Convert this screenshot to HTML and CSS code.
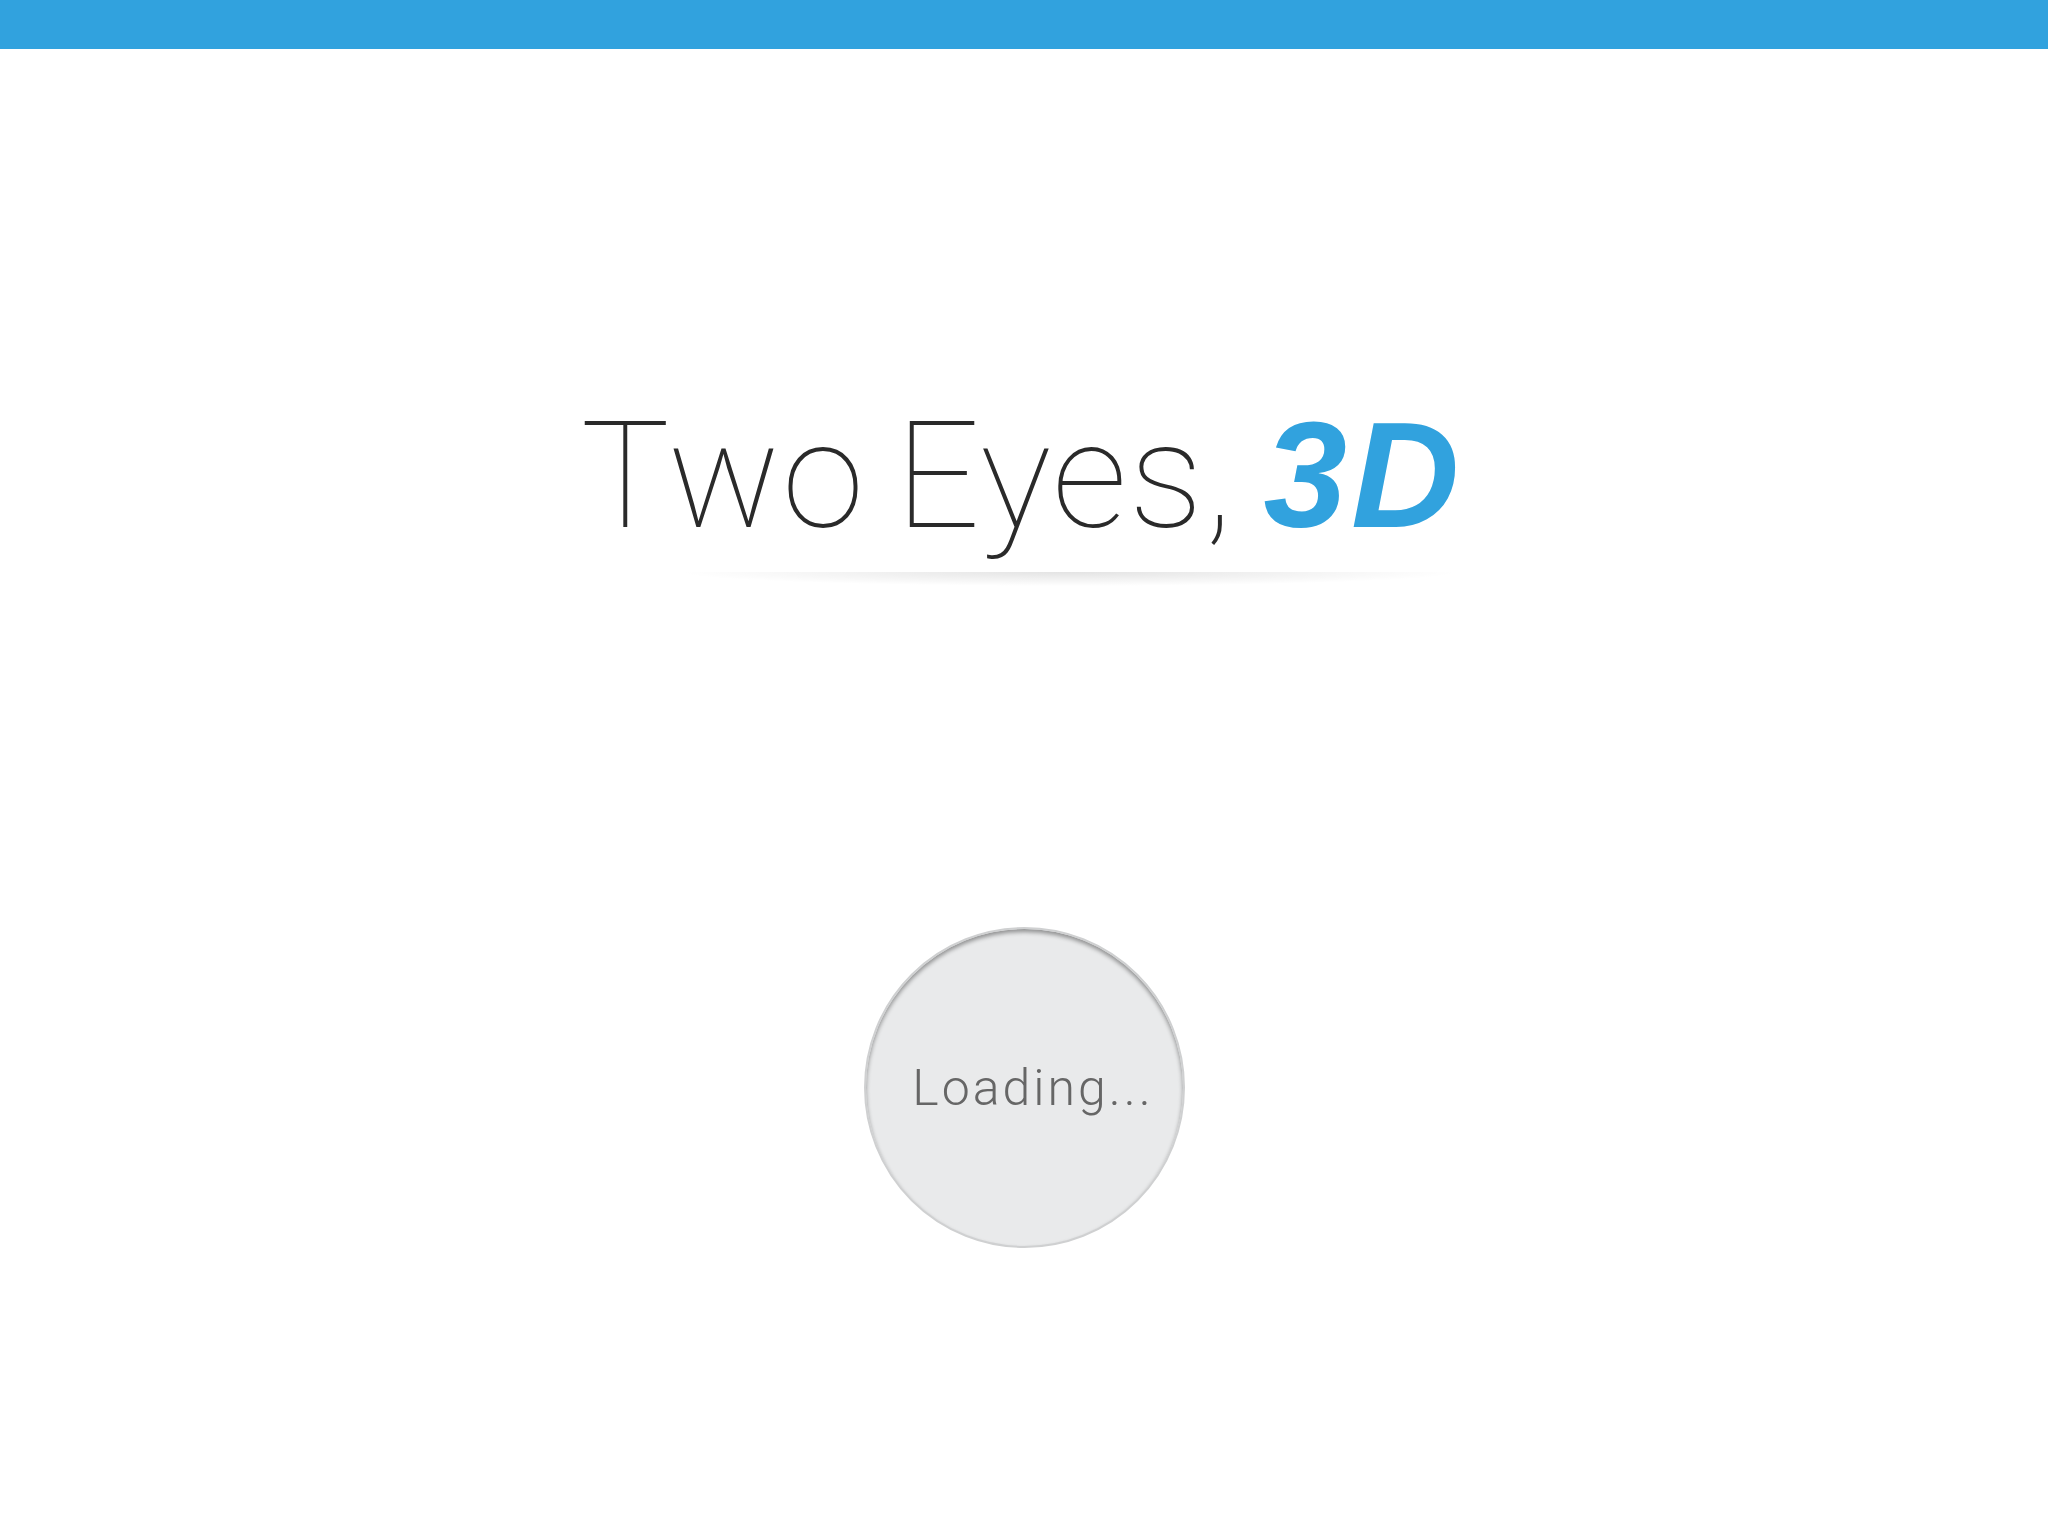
FILE: index.html
```html
<!DOCTYPE html>
<html lang="en">
<head>
<meta charset="utf-8">
<title>Two Eyes, 3D</title>
<link rel="stylesheet" href="styles.css">
</head>
<body>
<header class="topbar"></header>
<main class="content">
  <h1 class="title"><span class="title-thin">Two Eyes,</span> <span class="title-bold">3D</span></h1>
  <div class="title-shadow"></div>
  <div class="loader"><span class="loader-text">Loading...</span></div>
</main>
</body>
</html>
```
FILE: styles.css
```css
html, body {
  margin: 0;
  padding: 0;
  background: #ffffff;
}
body {
  font-family: "Roboto", "Liberation Sans", sans-serif;
  width: 2048px;
  height: 1536px;
  overflow: hidden;
}
.topbar {
  height: 49px;
  background: #31a2de;
}
.content {
  display: flex;
  flex-direction: column;
  align-items: center;
}
.title {
  margin: 352px 0 0 0;
  font-size: 149px;
  line-height: 149px;
  font-weight: normal;
  white-space: nowrap;
  color: #2a2a2a;
  word-spacing: -8px;
}
.title-thin {
  font-family: "Roboto", sans-serif;
  font-weight: 100;
  letter-spacing: 1.8px;
}
.title-bold {
  font-family: "Liberation Sans", Arial, sans-serif;
  font-weight: bold;
  font-style: italic;
  font-size: 150px;
  letter-spacing: 4px;
  margin-right: 4px;
  color: #31a2de;
}
.title-shadow {
  margin-top: 21px;
  margin-left: 90px;
  width: 780px;
  height: 14px;
  background: radial-gradient(ellipse 50% 100% at 50% 0%, rgba(0,0,0,0.11), rgba(0,0,0,0) 100%);
}
.loader {
  margin-top: 341px;
  width: 321px;
  height: 321px;
  box-sizing: border-box;
  border-radius: 50%;
  background: #e9eaeb;
  border: 2px solid #cfd0d1;
  box-shadow: inset 0 3px 4px rgba(0,0,0,0.38);
  display: flex;
  align-items: center;
  justify-content: center;
}
.loader-text {
  font-family: "Roboto", sans-serif;
  font-weight: 300;
  font-size: 50px;
  letter-spacing: 3px;
  color: #666666;
  padding-left: 18px;
}
```
